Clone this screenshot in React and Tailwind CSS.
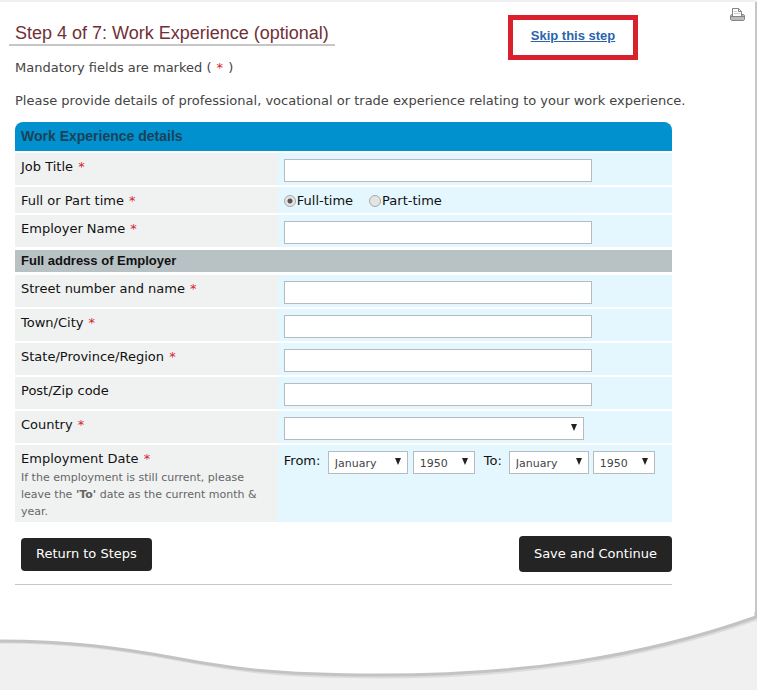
import React, { useState } from "react";

const months = [
  "January", "February", "March", "April", "May", "June",
  "July", "August", "September", "October", "November", "December",
];
const years = Array.from({ length: 80 }, (_, i) => String(1950 + i));

const Required = () => <span className="mx-px text-[#d8232a]">*</span>;

function Row({ label, htmlFor, required, hint, children }) {
  return (
    <tr>
      <th scope="row" className="bg-[#f0f2f2] px-[6px] pt-1 pb-[2px] text-left align-top font-normal leading-5">
        <label htmlFor={htmlFor}>{label}</label> {required && <Required />}
        {hint}
      </th>
      <td className="bg-[#e4f7fe] px-[6px] pt-[6px] pb-[3px] align-top">{children}</td>
    </tr>
  );
}

function TextRow({ label, name, required, value, onChange }) {
  return (
    <Row label={label} htmlFor={name} required={required}>
      <input
        id={name}
        name={name}
        type="text"
        value={value}
        onChange={onChange}
        className="block h-[23px] w-[308px] max-w-full border border-[#b4bcc0] bg-white px-1"
      />
    </Row>
  );
}

function SelectBox({ name, label, value, onChange, options, className }) {
  return (
    <div className={`relative shrink-0 ${className}`}>
      <select
        id={name}
        name={name}
        aria-label={label}
        value={value}
        onChange={onChange}
        className="block h-[23px] w-full appearance-none border border-[#b4bcc0] bg-white pt-[2px] pl-[6px] text-[11px] text-[#444]"
      >
        {options.map((o) => (
          <option key={o} value={o}>{o}</option>
        ))}
      </select>
      <svg viewBox="0 0 6 7" className="pointer-events-none absolute top-[7px] right-[7px] h-[7px] w-[6px]">
        <path d="M0 0h6L3 7z" fill="#222" />
      </svg>
    </div>
  );
}

function PrinterIcon() {
  return (
    <svg viewBox="0 0 15 13" className="h-[13px] w-[15px]" fill="none" stroke="#858585">
      <path d="M.5 7.500l1-1h12l1 1v4l-1 1h-12l-1-1z" fill="#bbb" />
      <path d="M2.500 8.500v-8h6l3 3v5z" fill="#fff" />
      <path d="M8.500 .5v3h3" />
      <path d="M4 3.500h3M4 5.500h6" stroke="#ccc" />
      <path d="M.5 8.500h14" />
    </svg>
  );
}

function App() {
  const [formData, setFormData] = useState({
    jobTitle: "",
    workType: "full",
    employer: "",
    street: "",
    city: "",
    region: "",
    postcode: "",
    country: "",
    fromMonth: "January",
    fromYear: "1950",
    toMonth: "January",
    toYear: "1950",
  });

  const handleChange = (e) => {
    const { name, value } = e.target;
    setFormData({ ...formData, [name]: value });
  };

  const radioClass =
    "mr-px size-3 appearance-none rounded-full border border-[#a8a8a8] bg-[#e4e4e4] checked:bg-[radial-gradient(circle,#555_0_2px,#e4e4e4_3px)]";

  return (
    <div className="min-h-screen bg-[#f0f0f0] pt-[2px] font-['Verdana','DejaVu_Sans',sans-serif] text-[13px] text-[#111]">
      <main className="border-r-2 border-[#c6c6c6] bg-white pb-[27px]">
        <div className="flex items-start justify-between pr-[10px] pl-[9px]">
          <h1 className="mt-[21px] border-b-2 border-[#c6c6c6] px-[6px] font-['Liberation_Sans',sans-serif] text-[18px] leading-[21px] text-[#703038]">
            Step 4 of 7: Work Experience (optional)
          </h1>
          <div className="flex items-start gap-[92px]">
            <div className="mt-[13px] flex h-[45px] w-[130px] items-center justify-center border-5 border-[#d9202c] pb-1 font-['Liberation_Sans',sans-serif] font-bold">
              <a href="#skip" className="text-[#2a64ad] underline">Skip this step</a>
            </div>
            <button type="button" aria-label="Print" className="mt-[6px]">
              <PrinterIcon />
            </button>
          </div>
        </div>

        <div className="pr-[60px] pl-[15px] leading-4 text-[#444]">
          <p>Mandatory fields are marked ( <Required /> )</p>
          <p className="mt-[17px]">
            Please provide details of professional, vocational or trade experience relating to your work experience.
          </p>
        </div>

        <form onSubmit={(e) => e.preventDefault()} className="mt-[11px] mr-[83px] ml-[15px]">
          <table className="w-full table-fixed border-separate border-spacing-x-0 border-spacing-y-[2px]">
            <colgroup>
              <col className="w-2/5" />
              <col className="w-3/5" />
            </colgroup>
            <thead>
              <tr>
                <th
                  colSpan="2"
                  className="h-[29px] rounded-t-lg bg-[#0091ce] px-[6px] pb-[2px] text-left font-['Liberation_Sans',sans-serif] text-[14px] leading-5 text-[#1c4258]"
                >
                  Work Experience details
                </th>
              </tr>
            </thead>
            <tbody>
              <TextRow label="Job Title" name="jobTitle" required value={formData.jobTitle} onChange={handleChange} />
              <Row label="Full or Part time" htmlFor="full" required>
                <div className="flex h-4 items-center leading-4">
                  <input id="full" type="radio" name="workType" value="full" checked={formData.workType === "full"} onChange={handleChange} className={radioClass} />
                  <label htmlFor="full" className="mr-4">Full-time</label>
                  <input id="part" type="radio" name="workType" value="part" checked={formData.workType === "part"} onChange={handleChange} className={radioClass} />
                  <label htmlFor="part">Part-time</label>
                </div>
              </Row>
              <TextRow label="Employer Name" name="employer" required value={formData.employer} onChange={handleChange} />
              <tr>
                <th
                  colSpan="2"
                  className="h-6 border-y border-white bg-[#b8c2c5] px-[6px] text-left font-['Liberation_Sans',sans-serif] leading-5"
                >
                  Full address of Employer
                </th>
              </tr>
              <TextRow label="Street number and name" name="street" required value={formData.street} onChange={handleChange} />
              <TextRow label="Town/City" name="city" required value={formData.city} onChange={handleChange} />
              <TextRow label="State/Province/Region" name="region" required value={formData.region} onChange={handleChange} />
              <TextRow label="Post/Zip code" name="postcode" value={formData.postcode} onChange={handleChange} />
              <Row label="Country" htmlFor="country" required>
                <SelectBox name="country" label="Country" value={formData.country} onChange={handleChange} options={["", "Australia", "New Zealand"]} className="w-[300px]" />
              </Row>
              <Row
                label="Employment Date"
                htmlFor="fromMonth"
                required
                hint={
                  <p className="pr-1 text-[11px] leading-[17px] text-[#666]">
                    If the employment is still current, please leave the <b>'To'</b> date as the current month &amp; year.
                  </p>
                }
              >
                <div className="flex items-center">
                  <span className="w-11 shrink-0 pb-1">From:</span>
                  <SelectBox name="fromMonth" label="From month" value={formData.fromMonth} onChange={handleChange} options={months} className="w-20" />
                  <SelectBox name="fromYear" label="From year" value={formData.fromYear} onChange={handleChange} options={years} className="ml-[5px] w-[62px]" />
                  <span className="ml-[9px] w-[25px] shrink-0 pb-1">To:</span>
                  <SelectBox name="toMonth" label="To month" value={formData.toMonth} onChange={handleChange} options={months} className="w-20" />
                  <SelectBox name="toYear" label="To year" value={formData.toYear} onChange={handleChange} options={years} className="ml-1 w-[62px]" />
                </div>
              </Row>
            </tbody>
          </table>

          <div className="mt-3 flex items-center justify-between border-b border-[#c6c6c6] pb-3 pl-[6px] text-white">
            <button type="button" className="h-[33px] rounded-[4px] bg-[#242424] px-[15px]">
              Return to Steps
            </button>
            <button type="submit" className="h-9 rounded-[4px] bg-[#242424] px-[15px]">
              Save and Continue
            </button>
          </div>
        </form>
      </main>

      {/* curved bottom edge of the page */}
      <svg viewBox="0 0 757 78" preserveAspectRatio="none" className="block h-[78px] w-full" fill="none">
        <path
          d="M0 28C70 28 120 35 175 45S270 64 380 64C520 64 640 46 755 6V0H0Z"
          fill="#fff"
        />
        <path d="M0 30C70 30 120 37 175 47S270 65 380 65C520 65 640 48 757 7" stroke="#dcdcdc" strokeWidth="3" />
        <path d="M0 29C70 29 120 36 175 46S270 63 380 63C520 63 640 46 756 5V0" stroke="#c3c3c3" strokeWidth="3" />
      </svg>
    </div>
  );
}

export default App;
